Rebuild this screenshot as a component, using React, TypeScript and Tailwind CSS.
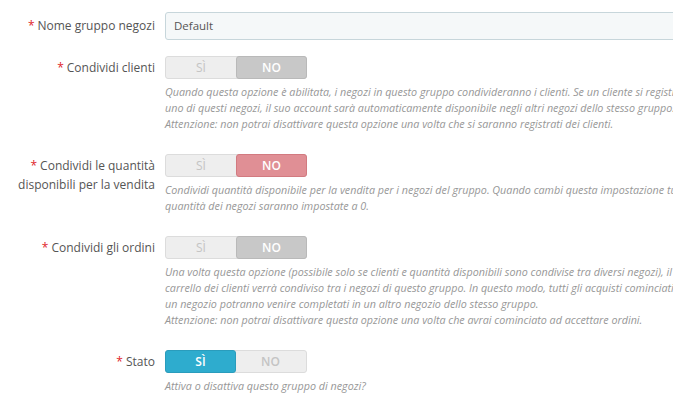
import React from "react";

type Active = "yes-blue" | "no-gray" | "no-red";

function Toggle({ active }: { active: Active }) {
  const yesOn = active === "yes-blue";
  return (
    <div className="relative flex h-[23px] w-[142px] rounded-[3px] border border-[#dcdcdc] bg-[#eeeeee] text-[12px] leading-[21px]">
      <div
        className={
          yesOn
            ? "flex w-[71px] items-center justify-center rounded-[3px] border border-[#2a9cbc] bg-[#2eacce] -m-px h-[23px] text-white font-semibold"
            : "flex w-[71px] items-center justify-center text-[#c4c4c4]"
        }
      >
        SÌ
      </div>
      <div
        className={
          active === "no-gray"
            ? "flex w-[72px] items-center justify-center rounded-[3px] border border-[#b9b9b9] bg-[#c8c8c8] -my-px -mr-px h-[23px] text-white font-semibold"
            : active === "no-red"
            ? "flex w-[72px] items-center justify-center rounded-[3px] border border-[#d27a80] bg-[#e08f95] -my-px -mr-px h-[23px] text-white font-semibold"
            : "flex w-[71px] items-center justify-center text-[#c4c4c4] font-semibold"
        }
      >
        NO
      </div>
    </div>
  );
}

function Label({ children, pt }: { children: React.ReactNode; pt: string }) {
  return (
    <div className={`w-[155px] shrink-0 text-right text-[12px] leading-[19px] text-[#555555] ${pt}`}>
      {children}
    </div>
  );
}

const Star = () => <span className="text-[#e0242b] mr-[3px]">*</span>;

function Help({ lines }: { lines: string[] }) {
  return (
    <div className="mt-[5px] whitespace-nowrap text-[10.75px] italic leading-[16px] text-[#979797]">
      {lines.map((l, i) => (
        <div key={i}>{l}</div>
      ))}
    </div>
  );
}

export default function App() {
  return (
    <div
      className="h-[411px] w-[673px] overflow-hidden bg-white"
      style={{ fontFamily: '"Open Sans", sans-serif' }}
    >
      <div className="mt-[12px] flex">
        <Label pt="pt-[4px]">
          <Star />
          Nome gruppo negozi
        </Label>
        <div className="ml-[10px] flex h-[28px] w-[560px] shrink-0 items-center rounded-[3px] border border-[#c7d6db] bg-[#f5f8f9] pl-[8px] text-[11.5px] text-[#555555]">
          Default
        </div>
      </div>

      <div className="mt-[16px] flex">
        <Label pt="pt-[2px]">
          <Star />
          Condividi clienti
        </Label>
        <div className="ml-[10px] shrink-0">
          <Toggle active="no-gray" />
          <Help
            lines={[
              "Quando questa opzione è abilitata, i negozi in questo gruppo condivideranno i clienti. Se un cliente si registra in",
              "uno di questi negozi, il suo account sarà automaticamente disponibile negli altri negozi dello stesso gruppo.",
              "Attenzione: non potrai disattivare questa opzione una volta che si saranno registrati dei clienti.",
            ]}
          />
        </div>
      </div>

      <div className="mt-[22px] flex">
        <Label pt="pt-[2px]">
          <Star />
          Condividi le quantità disponibili per la vendita
        </Label>
        <div className="ml-[10px] shrink-0">
          <Toggle active="no-red" />
          <Help
            lines={[
              "Condividi quantità disponibile per la vendita per i negozi del gruppo. Quando cambi questa impostazione tutte le",
              "quantità dei negozi saranno impostate a 0.",
            ]}
          />
        </div>
      </div>

      <div className="mt-[22px] flex">
        <Label pt="pt-[2px]">
          <Star />
          Condividi gli ordini
        </Label>
        <div className="ml-[10px] shrink-0">
          <Toggle active="no-gray" />
          <Help
            lines={[
              "Una volta questa opzione (possibile solo se clienti e quantità disponibili sono condivise tra diversi negozi), il",
              "carrello dei clienti verrà condiviso tra i negozi di questo gruppo. In questo modo, tutti gli acquisti cominciati in",
              "un negozio potranno venire completati in un altro negozio dello stesso gruppo.",
              "Attenzione: non potrai disattivare questa opzione una volta che avrai cominciato ad accettare ordini.",
            ]}
          />
        </div>
      </div>

      <div className="mt-[22px] flex">
        <Label pt="pt-[2px]">
          <Star />
          Stato
        </Label>
        <div className="ml-[10px] shrink-0">
          <Toggle active="yes-blue" />
          <Help lines={["Attiva o disattiva questo gruppo di negozi?"]} />
        </div>
      </div>
    </div>
  );
}
